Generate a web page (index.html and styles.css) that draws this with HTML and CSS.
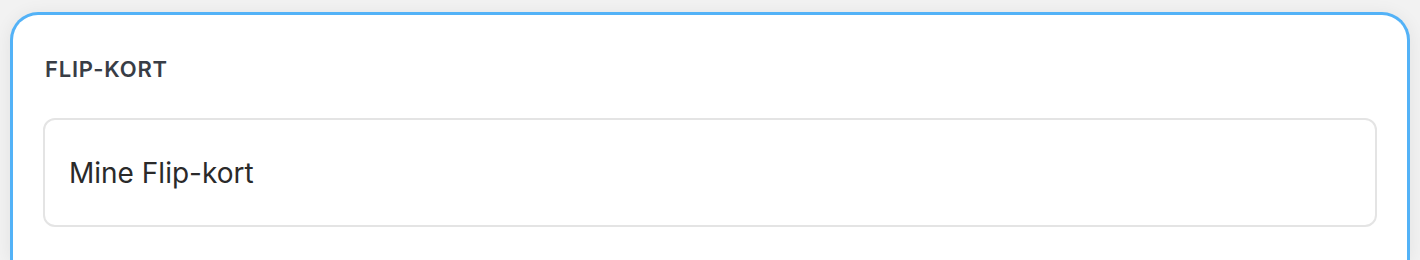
FILE: index.html
```html
<!DOCTYPE html>
<html lang="no">
<head>
<meta charset="utf-8">
<title>Flip-kort</title>
<link rel="stylesheet" href="styles.css">
</head>
<body>
  <section class="card">
    <h2 class="card-title">FLIP-KORT</h2>
    <div class="field">Mine Flip-kort</div>
  </section>
</body>
</html>
```

FILE: styles.css
```css
html, body {
  margin: 0;
  padding: 0;
}
body {
  background: #f2f2f2;
  font-family: Inter, "Noto Sans", "Liberation Sans", sans-serif;
  padding: 12px 10px 0 10px;
  height: 260px;
  box-sizing: border-box;
  overflow: hidden;
}
.card {
  background: #ffffff;
  border: 3px solid #53b2f7;
  border-bottom: 0;
  border-radius: 28px 28px 0 0;
  padding: 43px 30px 0 30px;
  height: 248px;
  box-sizing: border-box;
  box-shadow: 0 2px 18px rgba(0, 0, 0, 0.07);
}
.card-title {
  margin: 0 0 0 2px;
  font-size: 22px;
  line-height: 22px;
  font-weight: 600;
  color: #383d46;
  letter-spacing: 0.8px;
}
.field {
  margin-top: 38px;
  border: 2px solid #e4e4e4;
  border-radius: 12px;
  box-sizing: border-box;
  height: 109px;
  padding: 0 24px;
  display: flex;
  align-items: center;
  font-size: 28px;
  color: #2a2a2a;
}
```
